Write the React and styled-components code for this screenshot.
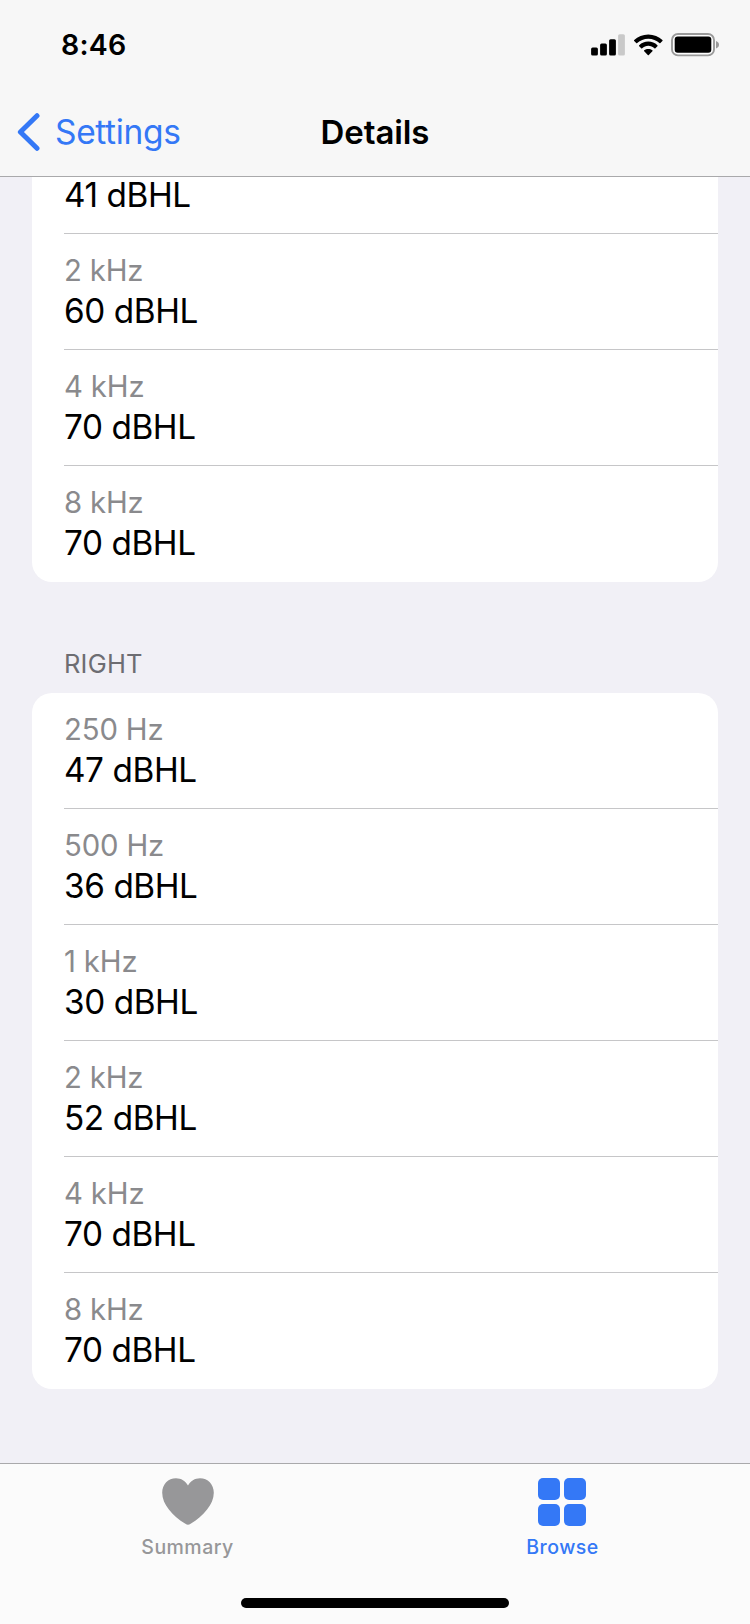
import React from 'react'
import styled, { createGlobalStyle } from 'styled-components'

const rightEar = [
  { frequency: '250 Hz', level: '47 dBHL' },
  { frequency: '500 Hz', level: '36 dBHL' },
  { frequency: '1 kHz', level: '30 dBHL' },
  { frequency: '2 kHz', level: '52 dBHL' },
  { frequency: '4 kHz', level: '70 dBHL' },
  { frequency: '8 kHz', level: '70 dBHL' },
]

const leftEar = [
  { level: '41 dBHL' },
  { frequency: '2 kHz', level: '60 dBHL' },
  { frequency: '4 kHz', level: '70 dBHL' },
  { frequency: '8 kHz', level: '70 dBHL' },
]

const SignalIcon = () => (
  <svg width='34' height='22' viewBox='0 0 34 22'>
    <rect x='0.1' y='13.4' width='6.8' height='8' rx='1.5' />
    <rect x='9.1' y='9.4' width='6.8' height='12' rx='1.5' />
    <rect x='18.1' y='5.2' width='6.8' height='16.2' rx='1.5' />
    <rect x='27.1' y='0.3' width='6.8' height='21.1' rx='1.5' fill='#c9c9c9' />
  </svg>
)

const WifiIcon = () => (
  <svg width='29' height='22' viewBox='0.2 0 29 22'>
    <path d='M14.5 0.4C20 0.4 25 2.6 28.6 6.1C28.9 6.4 28.9 6.8 28.6 7.1L26.6 9.1C26.3 9.4 25.9 9.4 25.6 9.1C22.7 6.3 18.8 4.7 14.5 4.7C10.2 4.7 6.3 6.3 3.4 9.1C3.1 9.4 2.7 9.4 2.4 9.1L0.4 7.1C0.1 6.8 0.1 6.4 0.4 6.1C4 2.6 9 0.4 14.5 0.4Z' />
    <path d='M14.5 7.6C18 7.6 21.2 8.9 23.6 11.2C23.9 11.5 23.9 11.9 23.6 12.2L21.6 14.2C21.3 14.5 20.9 14.5 20.6 14.2C19 12.7 16.8 11.8 14.5 11.8C12.2 11.8 10 12.7 8.4 14.2C8.1 14.5 7.7 14.5 7.4 14.2L5.4 12.2C5.1 11.9 5.1 11.5 5.4 11.2C7.8 8.9 11 7.6 14.5 7.6Z' />
    <path d='M14.5 14.9C16 14.9 17.5 15.4 18.6 16.3C18.9 16.6 18.9 17 18.6 17.3L15 20.9C14.7 21.2 14.3 21.2 14 20.9L10.4 17.3C10.1 17 10.1 16.6 10.4 16.3C11.5 15.4 13 14.9 14.5 14.9Z' />
  </svg>
)

const BatteryIcon = () => (
  <svg width='49' height='24' viewBox='0 0 49 24'>
    <rect x='1' y='1' width='42' height='21.4' rx='6' fill='#fdfdfd' stroke='#9a9a9a' strokeWidth='1.9' />
    <rect x='3.7' y='3.6' width='36.6' height='16.2' rx='3' />
    <path d='M45 8C47 8.7 48 10 48 11.7C48 13.4 47 14.7 45 15.4Z' fill='#9a9a9a' />
  </svg>
)

const BackIcon = () => (
  <svg width='24' height='40' viewBox='0 0 24 40'>
    <path
      d='M20 3.7L3.4 20L20 36.3'
      fill='none'
      stroke='#3478f6'
      strokeWidth='5'
      strokeLinecap='round'
      strokeLinejoin='round'
    />
  </svg>
)

const HeartIcon = () => (
  <svg width='52' height='48' viewBox='0 0 52 48'>
    <path
      d='M26 7.4C28.5 3 32.9 0.2 38 0.2C45.8 0.2 51.8 6.3 51.8 14.7C51.8 26.4 41.6 37.6 28.6 45.8C27.7 46.4 26.8 46.8 26 46.8C25.2 46.8 24.3 46.4 23.4 45.8C10.4 37.6 0.2 26.4 0.2 14.7C0.2 6.3 6.2 0.2 14 0.2C19.1 0.2 23.5 3 26 7.4Z'
      fill='#979799'
    />
  </svg>
)

const GridIcon = () => (
  <svg width='50' height='48' viewBox='0 0 50 48' fill='#3478f6'>
    <rect x='0' y='0' width='22' height='22' rx='5' />
    <rect x='26' y='0' width='22' height='22' rx='5' />
    <rect x='0' y='26' width='22' height='22' rx='5' />
    <rect x='26' y='26' width='22' height='22' rx='5' />
  </svg>
)

const Readings = ({ items, clipped }) => (
  <Card $clipped={clipped}>
    {items.map((item, index) => (
      <Row key={index} $partial={!item.frequency}>
        {item.frequency && <Frequency>{item.frequency}</Frequency>}
        <Level>{item.level}</Level>
      </Row>
    ))}
  </Card>
)

const App = () => {
  return (
    <>
      <GlobalStyle />
      <Screen>
        <Header>
          <StatusBar>
            <Time>8:46</Time>
            <StatusIcons>
              <SignalIcon />
              <WifiIcon />
              <BatteryIcon />
            </StatusIcons>
          </StatusBar>
          <NavBar>
            <BackButton>
              <BackIcon />
              <span>Settings</span>
            </BackButton>
            <Title>Details</Title>
          </NavBar>
        </Header>
        <Content>
          <Readings items={leftEar} clipped />
          <SectionTitle>RIGHT</SectionTitle>
          <Readings items={rightEar} />
        </Content>
        <TabBar>
          <Tabs>
            <Tab>
              <HeartIcon />
              <span>Summary</span>
            </Tab>
            <Tab $active>
              <GridIcon />
              <span>Browse</span>
            </Tab>
          </Tabs>
          <HomeIndicator />
        </TabBar>
      </Screen>
    </>
  )
}

const GlobalStyle = createGlobalStyle`
  * {
    box-sizing: border-box;
  }
  body {
    margin: 0;
    font-family: Inter, 'Liberation Sans', sans-serif;
  }
  h1, h2, p {
    margin: 0;
  }
  button {
    border: none;
    background: none;
    padding: 0;
    font-family: inherit;
  }
  svg {
    display: block;
    flex-shrink: 0;
  }
`

const Screen = styled.div`
  width: 750px;
  height: 1624px;
  display: flex;
  flex-direction: column;
  overflow: hidden;
  background: #f1f0f6;
`

const Header = styled.header`
  height: 177px;
  background: #f7f7f7;
  border-bottom: 1px solid #a9a9ab;
`

const StatusBar = styled.div`
  height: 88px;
  padding: 0 30px 0 61px;
  display: flex;
  justify-content: space-between;
  align-items: center;
`

const Time = styled.span`
  font-size: 28.5px;
  font-weight: 600;
  line-height: 36px;
  letter-spacing: 0.2px;
  padding-top: 2px;
`

const StatusIcons = styled.div`
  display: flex;
  align-items: center;
  gap: 8.5px;
  padding-top: 1px;
`

const NavBar = styled.div`
  height: 88px;
  display: grid;
  grid-template-columns: 1fr auto 1fr;
  align-items: center;
  padding: 0 17px;
`

const BackButton = styled.button`
  justify-self: start;
  display: flex;
  align-items: center;
  gap: 14px;
  color: #3478f6;
  font-size: 33.5px;
  line-height: 40px;
  letter-spacing: -0.35px;
`

const Title = styled.h1`
  font-size: 33px;
  font-weight: 600;
  line-height: 40px;
  letter-spacing: -0.1px;
`

const Content = styled.main`
  flex: 1;
  min-height: 0;
  padding: 0 32px;
`

const Card = styled.ul`
  list-style: none;
  margin: 0;
  padding: 0 0 0 32px;
  background: #fff;
  border-radius: ${({ $clipped }) => ($clipped ? '0 0 20px 20px' : '20px')};
`

const Row = styled.li`
  height: ${({ $partial }) => ($partial ? '57px' : '116px')};
  padding-bottom: 20px;
  display: flex;
  flex-direction: column;
  justify-content: flex-end;
  gap: 4px;
  border-bottom: 1px solid #c6c6c8;

  &:last-child {
    border-bottom-color: transparent;
  }
`

const Frequency = styled.p`
  color: #8a8a8d;
  font-size: 29.3px;
  line-height: 36px;
  letter-spacing: -0.15px;
`

const Level = styled.p`
  font-size: 33.3px;
  line-height: 36px;
  letter-spacing: -0.4px;
`

const SectionTitle = styled.h2`
  height: 111px;
  padding: 66px 32px 0;
  color: #6d6d72;
  font-size: 25.5px;
  font-weight: 400;
  line-height: 32px;
  letter-spacing: 0.2px;
`

const TabBar = styled.footer`
  height: 161px;
  display: flex;
  flex-direction: column;
  justify-content: space-between;
  align-items: center;
  padding-bottom: 16px;
  background: #fbfbfb;
  border-top: 1px solid #a9a9ab;
`

const Tabs = styled.nav`
  width: 100%;
  display: grid;
  grid-template-columns: 1fr 1fr;
`

const Tab = styled.button`
  display: flex;
  flex-direction: column;
  align-items: center;
  gap: 9px;
  padding-top: 14px;
  color: ${({ $active }) => ($active ? '#3478f6' : '#979799')};
  font-size: 19.5px;
  font-weight: 500;
  line-height: 24px;
  letter-spacing: 0.45px;
`

const HomeIndicator = styled.div`
  width: 268px;
  height: 10px;
  border-radius: 5px;
  background: #000;
`

export default App
